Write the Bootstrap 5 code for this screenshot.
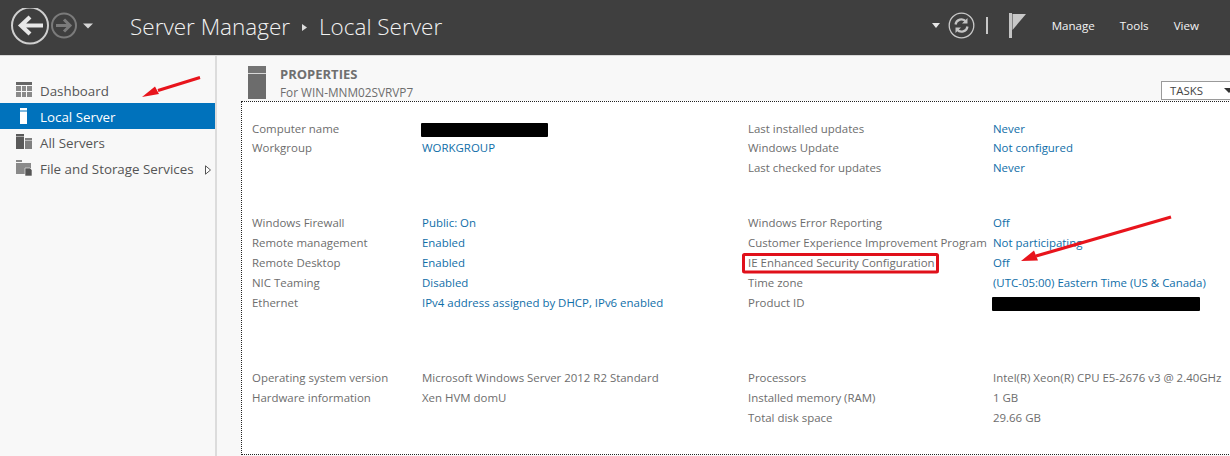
<!DOCTYPE html>
<html lang="en"><head><meta charset="utf-8"><title>Server Manager</title>
<link href="https://cdn.jsdelivr.net/npm/bootstrap@5.3.0/dist/css/bootstrap.min.css" rel="stylesheet">
<style>
html,body{height:100%;}
body{font-family:"Open Sans","Noto Sans",sans-serif;font-size:11.45px;color:#6d6d6d;background:#f8f8f8;overflow:hidden;position:relative;width:1230px;height:456px;}
.topbar{height:56px;background:#3f3f3f;border-bottom:1px solid #d8d8d8;color:#fff;}
.nav-area{padding-left:10px;width:130px;flex:none;}
.crumb{font-size:22.5px;font-weight:300;color:#f2f2f2;line-height:1;}
.crumb-sep{margin:0 12px;}
.tool-area{padding-right:31px;padding-bottom:3px;}
.tool-icons{padding-bottom:2px;}
.menu-txt{font-size:11.6px;color:#f4f4f4;}
.menu-gap{gap:25px;margin-left:25px;}
.vsep{width:2px;height:17px;background:#c8c8c8;margin:0 21px 0 11px;}
.side{width:217px;height:400px;border-right:2px solid #dcdcdc;padding-top:21px;flex:none;}
.side-item{height:26px;padding:3px 0 0 16px;font-size:13.35px;color:#555;gap:8px;white-space:nowrap;}
.side-item.active-item{background:#0072bc;color:#fff;}
.side-ico{width:16px;height:18px;flex:none;margin-bottom:5px;}
.side-more{margin-left:3px;}
.main-area{min-width:0;flex:1;padding-left:24px;}
.prop-head{height:45px;padding-left:7px;position:relative;}
.prop-ico{width:18px;height:33px;margin-top:10px;flex:none;}
.prop-titles{margin-left:14px;padding-top:9px;font-size:11.8px;}
.prop-title{font-weight:700;color:#6f6f6f;font-size:13px;line-height:18px;}
.prop-sub{line-height:18px;}
.tasks-btn{border:1px solid #9a9a9a;background:#fff;color:#444;width:76px;height:19px;margin-top:25px;margin-left:auto;margin-right:-7px;padding-left:8px;font-size:11.4px;line-height:17px;gap:21px;}
.prop-box{height:354px;background:#fff;border:1px dotted #222;border-right:0;padding:17px 0 0 10px;width:1000px;}
.prop-grid{display:grid;grid-template-columns:170px 326px 245px 1fr;grid-auto-rows:20px;line-height:20px;white-space:nowrap;}
.prop-grid.grid-gap-a{grid-template-rows:20px 19px 20px;margin-bottom:35px;}
.grid-gap-b{margin-bottom:55px;}
.val-link{color:#0f6ea8;text-decoration:none;}
.redact{display:inline-block;background:#000;height:14px;vertical-align:middle;border-radius:1px;}
.redact-a{width:127px;margin-left:-1px;}
.redact-b{width:208px;margin-left:-1px;}
.overlay{position:absolute;left:0;top:0;pointer-events:none;}
.row-up{margin-top:-1px;}
</style></head>
<body>
<div class="topbar d-flex align-items-center">
  <div class="nav-area">
    <svg width="88" height="40" viewBox="10 7.500 88 40" class="d-block">
      <circle cx="30" cy="25" r="18" fill="none" stroke="#cfcfcf" stroke-width="2"/>
      <path d="M43 25H22M30 16.500 21 25l9 8.500" fill="none" stroke="#e8e8e8" stroke-width="4.200"/>
      <circle cx="64" cy="25" r="12" fill="none" stroke="#7b7b7b" stroke-width="2"/>
      <path d="M56 25h13M64 19l6 6-6 6" fill="none" stroke="#7b7b7b" stroke-width="3"/>
      <path d="M83 23h10l-5 5z" fill="#d6d6d6"/>
    </svg>
  </div>
  <div class="crumb d-flex align-items-center">Server Manager<svg class="crumb-sep" width="5" height="7" viewBox="0 0 5 7"><path d="M0 0l5 3.500L0 7z" fill="#ddd"/></svg>Local Server</div>
  <div class="tool-area ms-auto d-flex align-items-center">
    <div class="tool-icons d-flex align-items-center">
    <svg width="8" height="5" viewBox="0 0 8 5" class="me-2"><path d="M0 0h8L4 5z" fill="#e6e6e6"/></svg>
    <svg width="27" height="27" viewBox="0 0 27 27">
      <circle cx="13.500" cy="13.500" r="12.300" fill="none" stroke="#c9c9c9" stroke-width="1.300"/>
      <path d="M7.500 12.500a6 6 0 0 1 10.500-3M19.500 14.500a6 6 0 0 1-10.500 3" fill="none" stroke="#c4c4c4" stroke-width="2.200"/>
      <path d="M19.500 6v5.500H14zM7.500 21v-5.500H13z" fill="#c4c4c4"/>
    </svg>
    <span class="vsep"></span>
    <svg width="18" height="25" viewBox="0 0 18 25"><rect width="3" height="25" fill="#c4c4c4"/><path d="M3.500 1H17L3.500 17z" fill="#c8c8c8"/></svg>
    </div>
    <div class="d-flex menu-gap menu-txt"><span>Manage</span><span>Tools</span><span>View</span></div>
  </div>
</div>
<div class="d-flex">
  <div class="side">
    <div class="side-item d-flex align-items-center">
      <svg class="side-ico" viewBox="0 0 16 18"><path d="M0 2h16v3H0z" fill="#666"/><path d="M0 6h5v5H0zM6 6h4v5H6zM11 6h5v5h-5zM0 12h5v5H0zM6 12h4v5H6zM11 12h5v5h-5z" fill="#8a8a8a"/></svg><span>Dashboard</span></div>
    <div class="side-item active-item d-flex align-items-center">
      <svg class="side-ico" viewBox="0 0 16 18"><path d="M4 2h7v2.500H4zM4 5.500h7V18H4z" fill="#fff"/></svg><span>Local Server</span></div>
    <div class="side-item d-flex align-items-center">
      <svg class="side-ico" viewBox="0 0 16 18"><path d="M0 2h8v2.500H0zM0 5h8v12H0z" fill="#5a5a5a"/><path d="M9 6h7v2.500H9zM9 9h7v8H9z" fill="#808080"/></svg><span>All Servers</span></div>
    <div class="side-item d-flex align-items-center">
      <svg class="side-ico" viewBox="0 0 16 18"><path d="M0 2h6v2H0z" fill="#8a8a8a"/><path d="M0 5h15v11H0z" fill="#8a8a8a"/><path d="M9 10h5l2 2v6H9z" fill="#555" stroke="#f8f8f8" stroke-width=".6"/></svg><span>File and Storage Services</span>
      <svg class="side-more" width="6" height="10" viewBox="0 0 6 10"><path d="M.5.800 5.500 5 .5 9.200z" fill="#fff" stroke="#555"/></svg></div>
  </div>
  <div class="main-area">
    <div class="prop-head d-flex" style="width:989px">
      <svg class="prop-ico" viewBox="0 0 18 33"><rect width="18" height="7" fill="#747474"/><rect y="7" width="18" height="1" fill="#d8d8d8"/><rect y="8" width="18" height="25" fill="#6c6c6c"/></svg>
      <div class="prop-titles"><div class="prop-title">PROPERTIES</div><div class="prop-sub">For WIN-MNM02SVRVP7</div></div>
      <div class="tasks-btn d-flex"><span>TASKS</span><svg width="10" height="17" viewBox="0 0 10 17"><path d="M0 6h10L5 11z" fill="#333"/></svg></div>
    </div>
    <div class="prop-box">
      <div class="prop-grid grid-gap-a">
        <div>Computer name</div><div><span class="redact redact-a"></span></div><div>Last installed updates</div><div><a class="val-link" href="#">Never</a></div>
        <div class="row-up">Workgroup</div><div class="row-up"><a class="val-link" href="#">WORKGROUP</a></div><div class="row-up">Windows Update</div><div class="row-up"><a class="val-link" href="#">Not configured</a></div>
        <div></div><div></div><div>Last checked for updates</div><div><a class="val-link" href="#">Never</a></div>
      </div>
      <div class="prop-grid grid-gap-b">
        <div>Windows Firewall</div><div><a class="val-link" href="#">Public: On</a></div><div>Windows Error Reporting</div><div><a class="val-link" href="#">Off</a></div>
        <div>Remote management</div><div><a class="val-link" href="#">Enabled</a></div><div>Customer Experience Improvement Program</div><div><a class="val-link" href="#">Not participating</a></div>
        <div>Remote Desktop</div><div><a class="val-link" href="#">Enabled</a></div><div>IE Enhanced Security Configuration</div><div><a class="val-link" href="#">Off</a></div>
        <div>NIC Teaming</div><div><a class="val-link" href="#">Disabled</a></div><div>Time zone</div><div><a class="val-link" href="#">(UTC-05:00) Eastern Time (US &amp; Canada)</a></div>
        <div>Ethernet</div><div><a class="val-link" href="#">IPv4 address assigned by DHCP, IPv6 enabled</a></div><div>Product ID</div><div><span class="redact redact-b"></span></div>
      </div>
      <div class="prop-grid">
        <div>Operating system version</div><div>Microsoft Windows Server 2012 R2 Standard</div><div>Processors</div><div>Intel(R) Xeon(R) CPU E5-2676 v3 @ 2.40GHz</div>
        <div>Hardware information</div><div>Xen HVM domU</div><div>Installed memory (RAM)</div><div>1 GB</div>
        <div></div><div></div><div>Total disk space</div><div>29.66 GB</div>
      </div>
    </div>
  </div>
</div>
<svg class="overlay" width="1230" height="456" viewBox="0 0 1230 456">
  <path d="M200 77.500 158 90.500" stroke="#e8141c" stroke-width="3" fill="none"/>
  <path d="M142 97 155 86.500 159 94z" fill="#e8141c"/>
  <path d="M1171 217 1036 256" stroke="#e8141c" stroke-width="3.200" fill="none"/>
  <path d="M1021 261 1034 250.500 1038 260.500z" fill="#e8141c"/>
  <rect x="743.500" y="254.500" width="194" height="17.500" rx="1" fill="none" stroke="#e0101a" stroke-width="3"/>
</svg>
</body></html>
